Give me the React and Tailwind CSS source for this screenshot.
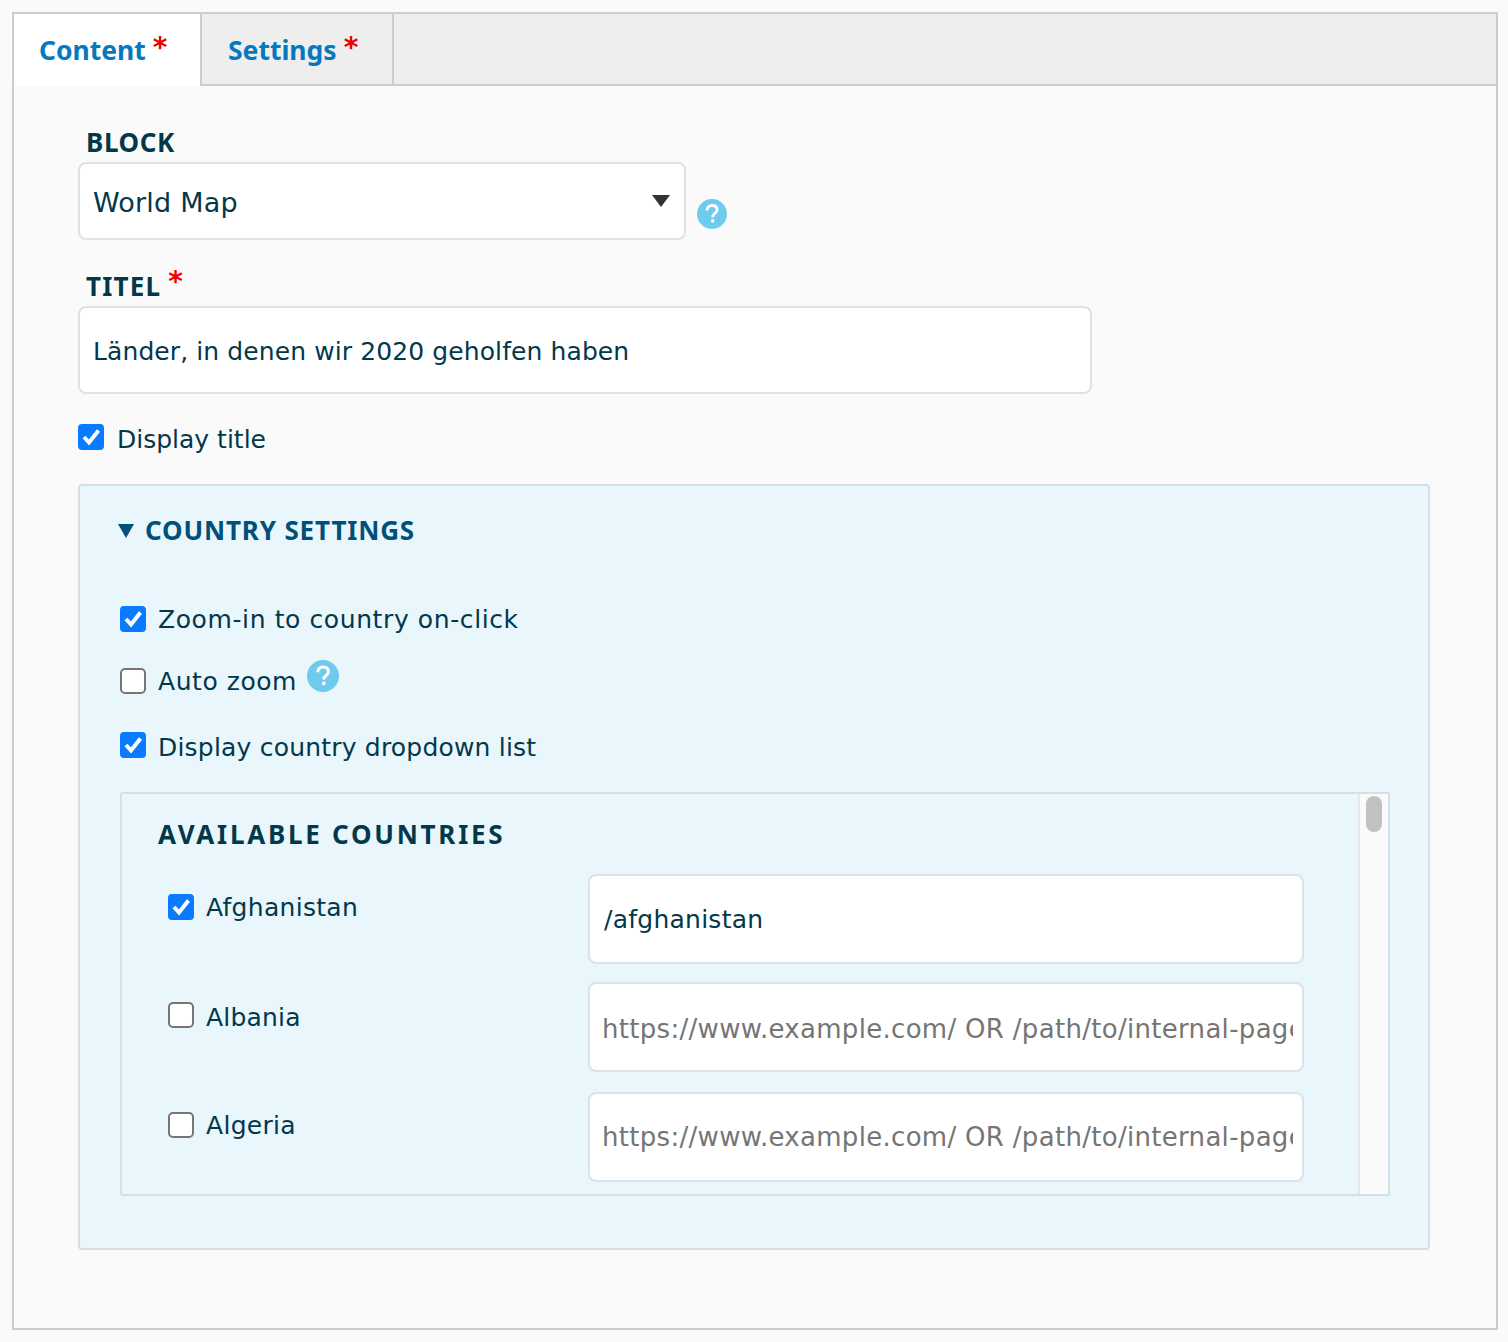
const font = { fontFamily: '"DejaVu Sans", sans-serif' };
const boldFont = { fontFamily: '"Noto Sans", sans-serif' };

const Star = ({ className }) => (
  <span className={`text-[#ee0000] font-bold leading-none ${className}`} style={font}>*</span>
);

const Help = ({ className }) => (
  <svg className={className} width="30" height="30" viewBox="0 0 30 30">
    <circle cx="15" cy="15" r="15" fill="#6fcbee" />
    <path
      d="M10 11.500c0-3.200 2.200-5 5.100-5 3 0 5 1.700 5 4.300 0 1.900-1 2.900-2.400 3.900-1.400 1-1.900 1.700-1.900 3.500"
      fill="none"
      stroke="#fff"
      strokeWidth="2.800"
    />
    <rect x="14.200" y="20.300" width="3" height="3.200" fill="#fff" />
  </svg>
);

const Check = ({ checked }) =>
  checked ? (
    <span className="flex h-[26px] w-[26px] shrink-0 items-center justify-center rounded-[4px] bg-[#0a7bff]">
      <svg width="26" height="26" viewBox="0 0 26 26" fill="none">
        <path d="M6 13l5 5.500L20.500 6.500" stroke="#fff" strokeWidth="4" />
      </svg>
    </span>
  ) : (
    <span className="block h-[26px] w-[26px] shrink-0 rounded-[5px] border-2 border-[#767676] bg-white"></span>
  );

const CountryRow = ({ name, checked, value, className, labelClass, inputClass }) => (
  <div className={`flex items-start ${className}`}>
    <div className="mt-[20px] flex h-[26px] w-[466px] items-center pl-[46px]">
      <Check checked={checked} />
      <span className={`ml-[12px] text-[25px] leading-[26px] ${labelClass}`}>{name}</span>
    </div>
    <input
      readOnly
      value={value}
      placeholder="https://www.example.com/ OR /path/to/internal-page"
      className={`h-[90px] w-[716px] rounded-[8px] border-2 border-[#d9e3e8] bg-white pr-[9px] text-[#03384b] placeholder:text-[#757575] ${inputClass}`}
      style={font}
    />
  </div>
);

const App = () => {
  return (
    <div className="h-[1342px] w-[1508px] overflow-hidden bg-[#fafafa] pl-[12px] pt-[12px] text-[#03384b]" style={font}>
      <div className="h-[1318px] w-[1486px] border-2 border-[#cccccc] bg-[#fafafa]">
        <div className="flex h-[72px] bg-[#eeeeee]">
          <div className="flex w-[186px] bg-white pl-[25px] pt-[16px] text-[#0678be]">
            <span className="text-[26.500px] font-bold leading-[40px]" style={boldFont}>Content</span>
            <Star className="ml-[7px] mt-[4px] text-[28px]" />
          </div>
          <div className="flex w-[194px] border-x-2 border-b-2 border-[#cccccc] pl-[26px] pt-[16px] text-[#0678be]">
            <span className="text-[26.500px] font-bold leading-[40px]" style={boldFont}>Settings</span>
            <Star className="ml-[7px] mt-[4px] text-[28px]" />
          </div>
          <div className="flex-1 border-b-2 border-[#cccccc]"></div>
        </div>

        <div className="pl-[64px]">
          <div className="mt-[39px] pl-[8px] text-[26px] font-bold leading-[34px] tracking-[0.6px]" style={boldFont}>BLOCK</div>
          <div className="mt-[3px] flex items-end">
            <div className="flex h-[78px] w-[608px] items-center justify-between rounded-[8px] border-2 border-[#d9e3e8] bg-white pl-[13px] pr-[14px]">
              <span className="pt-[4px] text-[27px] tracking-[0.2px]">World Map</span>
              <svg width="18" height="12" viewBox="0 0 18 12">
                <path d="M0 0h18L9 12z" fill="#333333" />
              </svg>
            </div>
            <Help className="mb-[11px] ml-[11px]" />
          </div>

          <div className="mt-[29px] flex pl-[8px]">
            <span className="text-[26px] font-bold leading-[34px] tracking-[1.2px]" style={boldFont}>TITEL</span>
            <Star className="ml-[7px] -mt-[1px] text-[28px]" />
          </div>
          <input
            readOnly
            value="Länder, in denen wir 2020 geholfen haben"
            className="mt-[3px] block h-[88px] w-[1014px] rounded-[8px] border-2 border-[#d9e3e8] bg-white pl-[13px] pt-[2px] text-[25px] tracking-[0.1px] text-[#03384b]"
            style={font}
          />

          <div className="mt-[30px] flex h-[26px] items-center">
            <Check checked />
            <span className="ml-[13px] pt-[6px] text-[25px] leading-[26px]">Display title</span>
          </div>

          <div className="mt-[34px] h-[766px] w-[1352px] rounded-[4px] border-2 border-[#d5e0e5] bg-[#e9f6fc]">
            <div className="ml-[38px] mt-[28px] flex items-center">
              <svg width="16" height="14" viewBox="0 0 16 14">
                <path d="M0 0h16L8 14z" fill="#00507a" />
              </svg>
              <span className="ml-[11px] pb-[2px] text-[26px] font-bold leading-[32px] tracking-[0.85px] text-[#00507a]" style={boldFont}>COUNTRY SETTINGS</span>
            </div>

            <div className="ml-[40px] mt-[58px] flex h-[26px] items-center">
              <Check checked />
              <span className="ml-[12px] pt-[1px] text-[25px] leading-[26px] tracking-[0.6px]">Zoom-in to country on-click</span>
            </div>
            <div className="ml-[40px] mt-[36px] flex h-[26px] items-center">
              <Check />
              <span className="ml-[12px] pt-[1px] text-[25px] leading-[26px] tracking-[0.55px]">Auto zoom</span>
              <Help className="-mt-[10px] ml-[10px] h-[32px] w-[32px] shrink-0" />
            </div>
            <div className="ml-[40px] mt-[38px] flex h-[26px] items-center">
              <Check checked />
              <span className="ml-[12px] pt-[5px] text-[25px] leading-[26px] tracking-[0.2px]">Display country dropdown list</span>
            </div>

            <div className="ml-[40px] mt-[34px] flex h-[404px] w-[1270px] overflow-hidden rounded-[3px] border-2 border-[#d5e0e5]">
              <div className="min-w-0 flex-1">
                <div className="ml-[36px] mt-[23px] text-[26px] font-bold leading-[34px] tracking-[2.750px]" style={boldFont}>AVAILABLE COUNTRIES</div>
                <div className="mt-[23px]">
                  <CountryRow
                    name="Afghanistan"
                    checked
                    value="/afghanistan"
                    labelClass="pt-[1px] tracking-[0.3px]"
                    inputClass="pl-[14px] text-[25px] tracking-[0.25px]"
                  />
                  <CountryRow
                    name="Albania"
                    value=""
                    className="mt-[18px]"
                    labelClass="pt-[5px] tracking-[0.2px]"
                    inputClass="pl-[12px] pt-[4px] text-[26px] tracking-[0.3px]"
                  />
                  <CountryRow
                    name="Algeria"
                    value=""
                    className="mt-[20px]"
                    labelClass="pt-[1px] tracking-[0.3px]"
                    inputClass="pl-[12px] text-[26px] tracking-[0.3px]"
                  />
                </div>
              </div>
              <div className="w-[30px] shrink-0 border-l-2 border-[#e8e8e8] bg-[#fafafa] pl-[6px] pt-[2px]">
                <div className="h-[36px] w-[16px] rounded-full bg-[#c1c1c1]"></div>
              </div>
            </div>
          </div>
        </div>
      </div>
    </div>
  );
};

export default App;
